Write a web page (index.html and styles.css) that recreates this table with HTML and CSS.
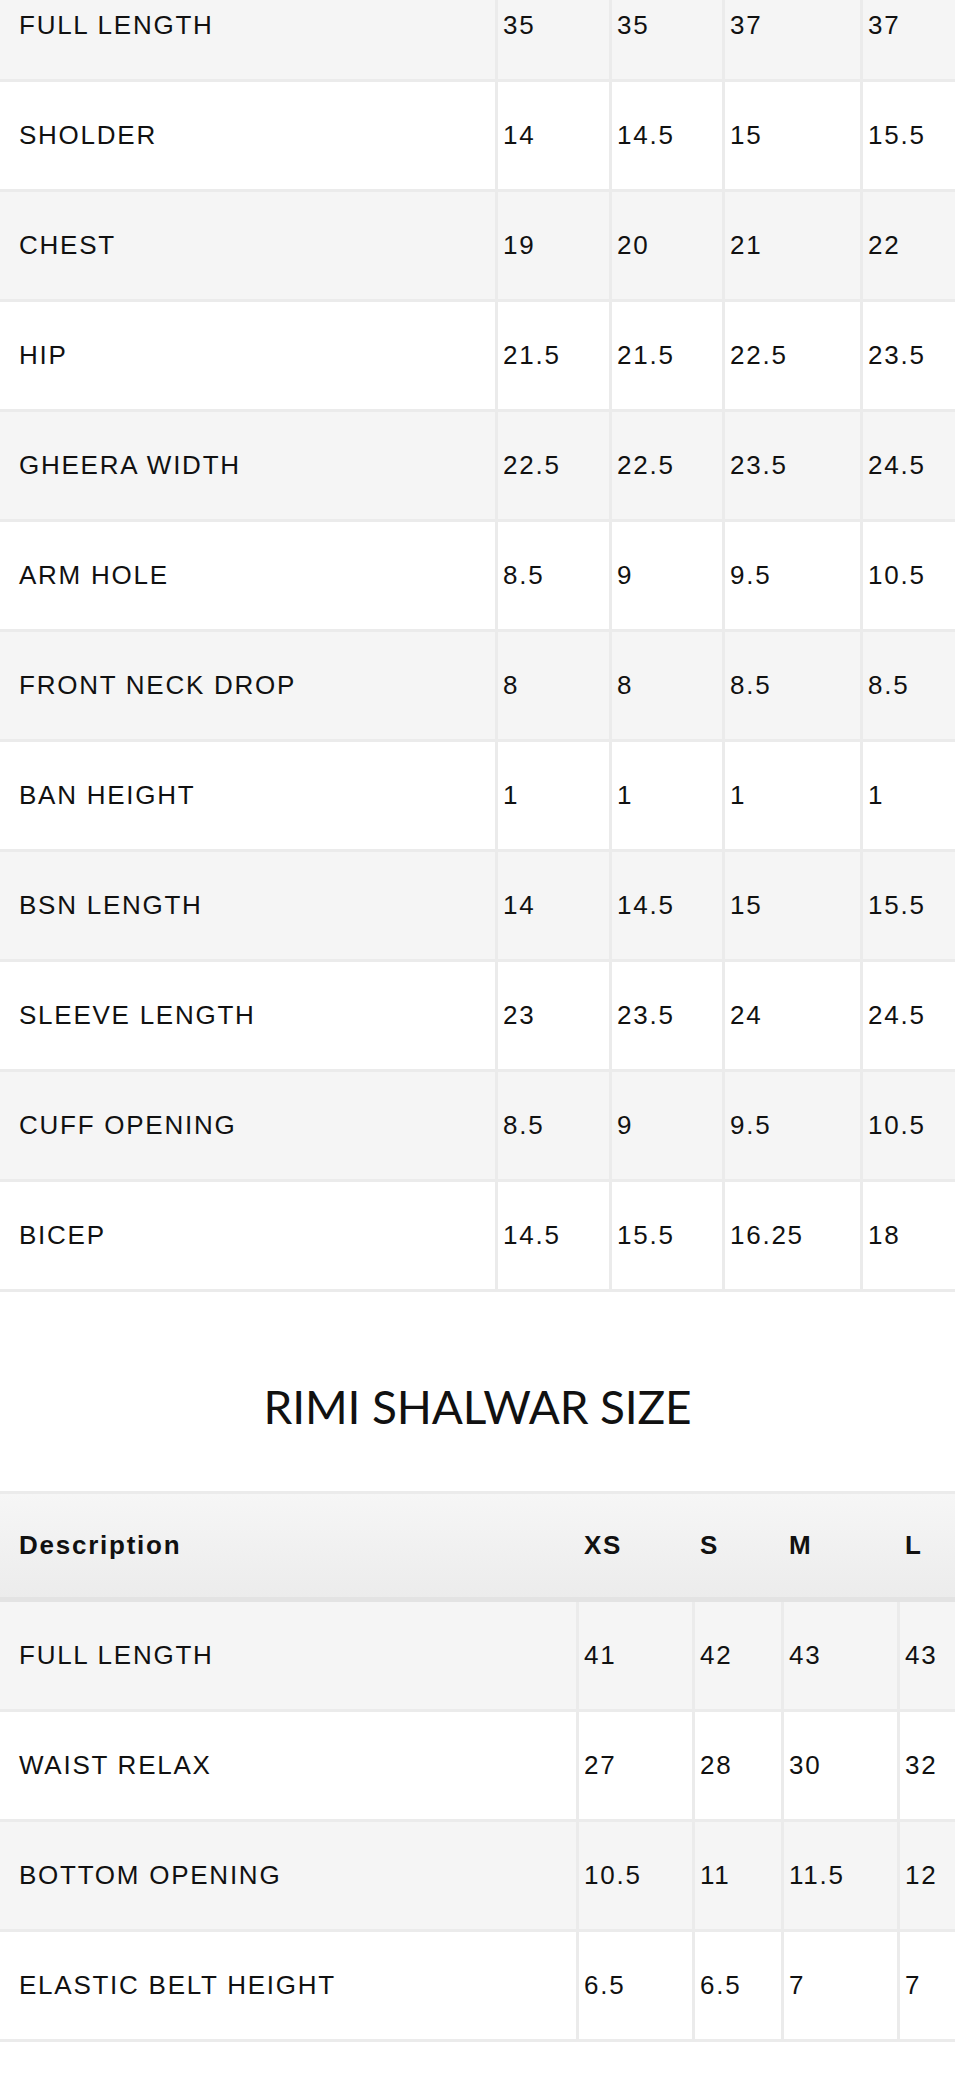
FILE: index.html
```html
<!DOCTYPE html>
<html lang="en">
<head>
<meta charset="utf-8">
<title>Size Chart</title>
<link rel="stylesheet" href="styles.css">
</head>
<body>
<div class="page">
  <table class="size-table kurta-table">
    <colgroup>
      <col class="c-desc"><col class="c-xs"><col class="c-s"><col class="c-m"><col class="c-l">
    </colgroup>
    <tbody>
      <tr><td>FULL LENGTH</td><td>35</td><td>35</td><td>37</td><td>37</td></tr>
      <tr><td>SHOLDER</td><td>14</td><td>14.5</td><td>15</td><td>15.5</td></tr>
      <tr><td>CHEST</td><td>19</td><td>20</td><td>21</td><td>22</td></tr>
      <tr><td>HIP</td><td>21.5</td><td>21.5</td><td>22.5</td><td>23.5</td></tr>
      <tr><td>GHEERA WIDTH</td><td>22.5</td><td>22.5</td><td>23.5</td><td>24.5</td></tr>
      <tr><td>ARM HOLE</td><td>8.5</td><td>9</td><td>9.5</td><td>10.5</td></tr>
      <tr><td>FRONT NECK DROP</td><td>8</td><td>8</td><td>8.5</td><td>8.5</td></tr>
      <tr><td>BAN HEIGHT</td><td>1</td><td>1</td><td>1</td><td>1</td></tr>
      <tr><td>BSN LENGTH</td><td>14</td><td>14.5</td><td>15</td><td>15.5</td></tr>
      <tr><td>SLEEVE LENGTH</td><td>23</td><td>23.5</td><td>24</td><td>24.5</td></tr>
      <tr><td>CUFF OPENING</td><td>8.5</td><td>9</td><td>9.5</td><td>10.5</td></tr>
      <tr><td>BICEP</td><td>14.5</td><td>15.5</td><td>16.25</td><td>18</td></tr>
    </tbody>
  </table>

  <h2 class="section-title">RIMI SHALWAR SIZE</h2>

  <table class="size-table shalwar-table">
    <colgroup>
      <col class="c-desc"><col class="c-xs"><col class="c-s"><col class="c-m"><col class="c-l">
    </colgroup>
    <thead>
      <tr><th>Description</th><th>XS</th><th>S</th><th>M</th><th>L</th></tr>
    </thead>
    <tbody>
      <tr><td>FULL LENGTH</td><td>41</td><td>42</td><td>43</td><td>43</td></tr>
      <tr><td>WAIST RELAX</td><td>27</td><td>28</td><td>30</td><td>32</td></tr>
      <tr><td>BOTTOM OPENING</td><td>10.5</td><td>11</td><td>11.5</td><td>12</td></tr>
      <tr><td>ELASTIC BELT HEIGHT</td><td>6.5</td><td>6.5</td><td>7</td><td>7</td></tr>
    </tbody>
  </table>
</div>
</body>
</html>
```

FILE: styles.css
```css
html, body {
  margin: 0;
  padding: 0;
  background: #ffffff;
}

.page {
  width: 955px;
  overflow: hidden;
  font-family: "Liberation Sans", Arial, sans-serif;
  color: #111111;
}

.size-table {
  width: 955px;
  table-layout: fixed;
  border-collapse: separate;
  border-spacing: 0;
  font-size: 26px;
  letter-spacing: 1.75px;
}

.size-table td,
.size-table th {
  box-sizing: border-box;
  height: 110px;
  padding: 0 0 0 5px;
  text-align: left;
  vertical-align: middle;
  white-space: nowrap;
  border-bottom: 3px solid #ebebeb;
}

.size-table td {
  font-weight: 400;
  border-right: 3px solid #ebebeb;
}

.size-table td:last-child {
  border-right: 0;
}

.size-table td:first-child,
.size-table th:first-child {
  padding-left: 19px;
}

.size-table tbody tr:nth-child(odd) td {
  background: #f5f5f5;
}

.size-table tbody tr:nth-child(even) td {
  background: #ffffff;
}

/* first (kurta) table: scrolled so the first row is partly out of view */
.kurta-table {
  margin-top: -28px;
}

.kurta-table .c-desc { width: 498px; }
.kurta-table .c-xs { width: 114px; }
.kurta-table .c-s { width: 113px; }
.kurta-table .c-m { width: 138px; }
.kurta-table .c-l { width: 92px; }

.section-title {
  margin: 87px 0 57px;
  font-family: "Lato", "Liberation Sans", sans-serif;
  font-weight: 400;
  font-size: 46px;
  line-height: 55px;
  letter-spacing: -0.15px;
  text-align: center;
  color: #111111;
}

.shalwar-table {
  border-top: 3px solid #ebebeb;
}

.shalwar-table .c-desc { width: 579px; }
.shalwar-table .c-xs { width: 116px; }
.shalwar-table .c-s { width: 89px; }
.shalwar-table .c-m { width: 116px; }
.shalwar-table .c-l { width: 55px; }

.shalwar-table th {
  height: 108px;
  font-weight: 700;
  background: linear-gradient(#f6f6f6, #ececec);
  border-bottom: 5px solid #e3e3e3;
}
```
